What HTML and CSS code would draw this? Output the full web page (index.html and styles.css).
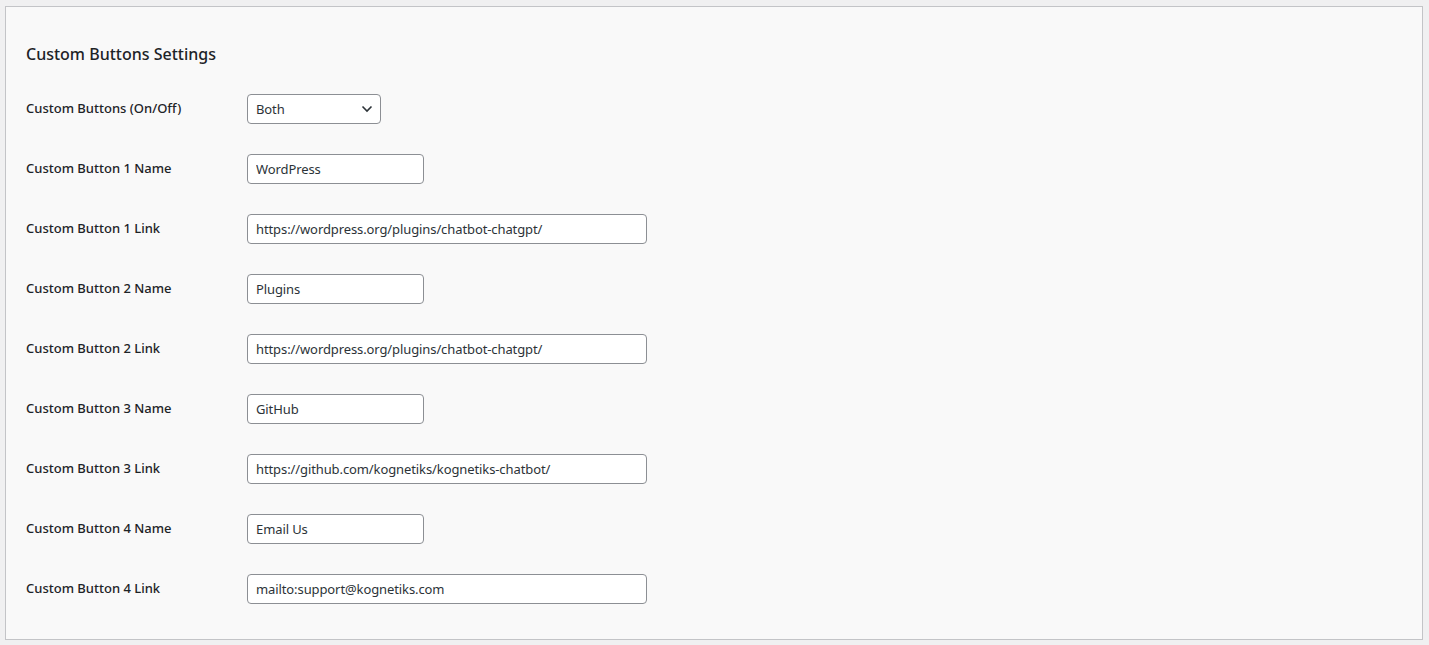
FILE: index.html
```html
<!DOCTYPE html>
<html lang="en">
<head>
<meta charset="utf-8">
<title>Custom Buttons Settings</title>
<link rel="stylesheet" href="styles.css">
</head>
<body>
<div class="page">
  <section class="panel">
    <h2 class="panel-title">Custom Buttons Settings</h2>
    <div class="form-table">
      <div class="row">
        <label class="label">Custom Buttons (On/Off)</label>
        <div class="field">
          <div class="select">
            <span>Both</span>
            <svg class="chev" width="12" height="8" viewBox="0 0 12 8"><path d="M1.5 1.5 L6 6 L10.5 1.5" fill="none" stroke="#2c3338" stroke-width="1.6"/></svg>
          </div>
        </div>
      </div>
      <div class="row">
        <label class="label">Custom Button 1 Name</label>
        <div class="field"><input class="input short" type="text" value="WordPress"></div>
      </div>
      <div class="row">
        <label class="label">Custom Button 1 Link</label>
        <div class="field"><input class="input long" type="text" value="https://wordpress.org/plugins/chatbot-chatgpt/"></div>
      </div>
      <div class="row">
        <label class="label">Custom Button 2 Name</label>
        <div class="field"><input class="input short" type="text" value="Plugins"></div>
      </div>
      <div class="row">
        <label class="label">Custom Button 2 Link</label>
        <div class="field"><input class="input long" type="text" value="https://wordpress.org/plugins/chatbot-chatgpt/"></div>
      </div>
      <div class="row">
        <label class="label">Custom Button 3 Name</label>
        <div class="field"><input class="input short" type="text" value="GitHub"></div>
      </div>
      <div class="row">
        <label class="label">Custom Button 3 Link</label>
        <div class="field"><input class="input long" type="text" value="https://github.com/kognetiks/kognetiks-chatbot/"></div>
      </div>
      <div class="row">
        <label class="label">Custom Button 4 Name</label>
        <div class="field"><input class="input short" type="text" value="Email Us"></div>
      </div>
      <div class="row">
        <label class="label">Custom Button 4 Link</label>
        <div class="field"><input class="input long" type="text" value="mailto:support@kognetiks.com"></div>
      </div>
    </div>
  </section>
</div>
</body>
</html>
```
FILE: styles.css
```css
html, body {
  margin: 0;
  padding: 0;
  background: #f0f0f1;
  font-family: "Noto Sans", "Open Sans", sans-serif;
  color: #1d2327;
}
.page {
  padding: 6px 6px 0 5px;
}
.panel {
  background: #f9f9f9;
  border: 1px solid #c3c4c7;
  padding: 36px 20px 19px 20px;
  box-sizing: border-box;
  height: 634px;
}
.panel-title {
  margin: 0 0 14px 0;
  font-size: 16px;
  font-weight: 500;
  line-height: 22px;
  color: #1d2327;
}
.form-table {
  display: flex;
  flex-direction: column;
}
.row {
  display: flex;
  height: 60px;
}
.label {
  width: 221px;
  flex: none;
  padding-top: 20px;
  font-size: 13px;
  font-weight: 500;
  line-height: 18px;
  box-sizing: border-box;
}
.field {
  padding-top: 15px;
}
.input, .select {
  box-sizing: border-box;
  height: 30px;
  border: 1px solid #8c8f94;
  border-radius: 4px;
  background: #fff;
  font-family: inherit;
  font-size: 13px;
  letter-spacing: -0.1px;
  color: #2c3338;
  padding: 0 8px;
  margin: 0;
  outline: none;
}
.short { width: 177px; }
.long { width: 400px; }
.select {
  width: 134px;
  display: flex;
  align-items: center;
  justify-content: space-between;
  padding-right: 7px;
}
.chev { display: block; }
```
